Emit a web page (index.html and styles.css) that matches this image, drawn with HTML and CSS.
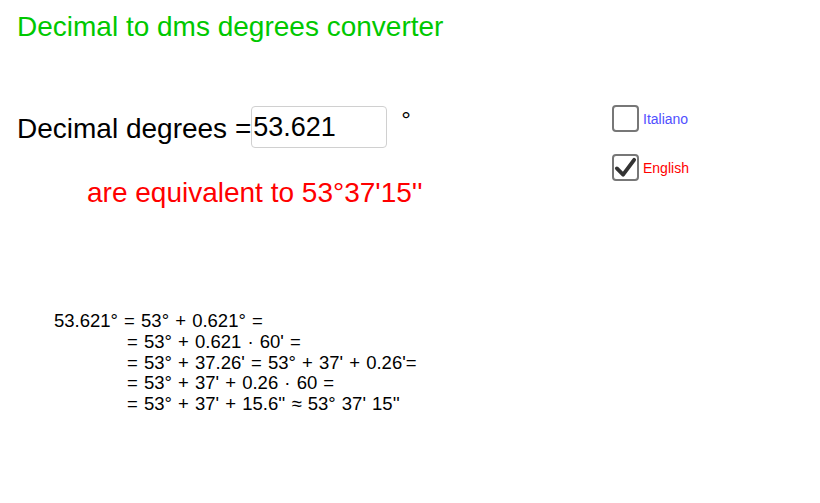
FILE: index.html
```html
<!DOCTYPE html>
<html lang="en">
<head>
    <meta charset="UTF-8">
    <meta name="viewport" content="width=device-width, initial-scale=1.0">
    <title>Decimal to dms degrees converter</title>
    <link rel="stylesheet" href="styles.css">
</head>
<body>

<div class="applet">
    <h1 class="title">Decimal to dms degrees converter</h1>

    <div class="top">
        <div class="main">
            <div class="input-row">
                <span class="label">Decimal degrees =</span>
                <input type="text" class="deg-input" value="53.621">
                <span class="deg-sign">°</span>
            </div>
            <div class="result">are equivalent to 53°37'15''</div>
        </div>

        <div class="options">
            <label class="option it">
                <span class="box"></span>
                <span>Italiano</span>
            </label>
            <label class="option en">
                <span class="box checked">
                    <svg width="23" height="23" viewBox="0 0 24 24">
                        <path d="M3 13 L9.5 19.5 L21 4" fill="none" stroke="#333" stroke-width="4" stroke-linecap="round" stroke-linejoin="round"/>
                    </svg>
                </span>
                <span>English</span>
            </label>
        </div>
    </div>

    <div class="steps">
        <div class="step first">53.621° = 53° + 0.621° =</div>
        <div class="step">= 53° + 0.621 · 60' =</div>
        <div class="step">= 53° + 37.26' = 53° + 37' + 0.26'=</div>
        <div class="step">= 53° + 37' + 0.26 · 60 =</div>
        <div class="step">= 53° + 37' + 15.6'' ≈ 53° 37' 15''</div>
    </div>
</div>

</body>
</html>
```

FILE: styles.css
```css
body {
    font-family: "Liberation Sans", Arial, sans-serif;
    margin: 0;
    padding: 0;
    background-color: #fff;
    color: #000;
}
.applet {
    width: 820px;
    height: 503px;
    padding: 11px 0 0 17px;
    box-sizing: border-box;
}
.title {
    margin: 0;
    font-size: 28px;
    font-weight: normal;
    color: #00c800;
    line-height: 32px;
}
.top {
    display: flex;
    margin-top: 63px;
}
.main {
    width: 595px;
}
.input-row {
    display: flex;
    align-items: flex-start;
    height: 42px;
}
.label {
    font-size: 28px;
    line-height: 30px;
    margin-top: 8px;
}
.deg-input {
    width: 136px;
    height: 42px;
    box-sizing: border-box;
    margin: 0;
    padding: 0 1px;
    border: 1px solid #d0d0d0;
    border-radius: 4px;
    font-family: inherit;
    font-size: 27px;
    color: #000;
    outline: none;
}
.deg-sign {
    font-size: 24px;
    line-height: 24px;
    margin-left: 14px;
    margin-top: 2px;
}
.result {
    color: #ff0000;
    font-size: 28px;
    line-height: 30px;
    margin: 30px 0 0 70px;
}
.options {
    display: flex;
    flex-direction: column;
    gap: 22px;
    margin-top: -1px;
}
.option {
    display: flex;
    align-items: center;
    gap: 4px;
    font-size: 14px;
}
.option.it {
    color: #5050ff;
}
.option.en {
    color: #ff0000;
}
.box {
    width: 27px;
    height: 27px;
    box-sizing: border-box;
    border: 2px solid #777;
    border-radius: 4px;
    display: flex;
    align-items: center;
    justify-content: center;
}
.steps {
    margin: 103px 0 0 37px;
    font-size: 18.5px;
    word-spacing: 1px;
}
.step {
    line-height: 20.75px;
    padding-left: 73px;
}
.step.first {
    padding-left: 0;
}
```
